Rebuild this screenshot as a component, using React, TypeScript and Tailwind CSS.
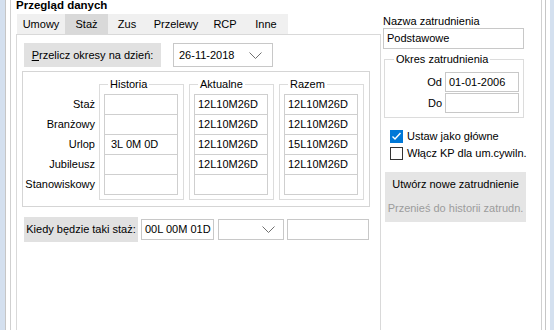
import React from 'react';

// Dane tabeli stażu
const rows = ['Staż', 'Branżowy', 'Urlop', 'Jubileusz', 'Stanowiskowy'];
const historia = ['', '', '3L 0M 0D', '', ''];
const aktualne = ['12L10M26D', '12L10M26D', '12L10M26D', '12L10M26D', ''];
const razem = ['12L10M26D', '12L10M26D', '15L10M26D', '12L10M26D', ''];

const tabs = [
    { label: 'Umowy', cls: 'w-[48px] bg-[#f0f0f0]' },
    { label: 'Staż', cls: 'w-[43px] bg-[#d9d9d9]' },
    { label: 'Zus', cls: 'w-[38px] bg-[#f0f0f0]' },
    { label: 'Przelewy', cls: 'w-[60px] bg-[#f0f0f0]' },
    { label: 'RCP', cls: 'w-[38px] bg-[#f0f0f0]' },
    { label: 'Inne', cls: 'w-[44px] bg-[#f0f0f0]' },
];

const Chevron = () => (
    <svg width="13" height="7" viewBox="0 0 13 7" className="shrink-0">
        <polyline points="0.5,0.5 6.5,6.5 12.5,0.5" fill="none" stroke="#707070" strokeWidth="1" />
    </svg>
);

function Column({ title, values, cellClass }: { title: string; values: string[]; cellClass: string }) {
    return (
        <fieldset className="w-[85px] border border-[#dcdcdc] pl-[4px] pr-[5px] pb-[4px]">
            <legend className="ml-[4px] px-[2px] leading-[14px]">{title}</legend>
            <div className="mt-[3px] border-x border-b border-[#cfcfcf]">
                {values.map((v, i) => (
                    <div key={i} className={`h-[20px] border-t border-[#cfcfcf] leading-[19px] whitespace-nowrap ${cellClass}`}>
                        {v}
                    </div>
                ))}
            </div>
        </fieldset>
    );
}

export default function App() {
    return (
        <div className="w-[554px] h-[330px] overflow-hidden flex bg-[#d4e0ef] text-[11px] text-black font-['Liberation_Sans',Arial,sans-serif]">
            <div className="w-[5px] shrink-0" />
            <div className="w-[541px] shrink-0 h-full bg-white border-x border-[#c6c6c6] pl-[4px] pr-[3px]">
                <div className="h-full border-x border-[#d0d0d0]">
                    {/* Tytuł grupy */}
                    <div className="h-[14px] leading-[10px] pl-[5px] font-bold text-[11.5px]">Przegląd danych</div>

                    <div className="flex h-[400px]">
                        {/* Lewa kolumna: zakładki */}
                        <div className="pl-[5px] flex flex-col">
                            <div className="flex h-[20px] pl-[1px]">
                                {tabs.map(t => (
                                    <div key={t.label} className={`${t.cls} h-[20px] leading-[20px] text-center`}>{t.label}</div>
                                ))}
                            </div>
                            <div className="w-[365px] flex-1 border border-[#d9d9d9]">
                                <div className="flex items-start mt-[8px] ml-[7px] gap-[12px]">
                                    <div className="w-[137px] h-[24px] bg-[#e1e1e1] leading-[24px] text-center">
                                        <span className="underline">P</span>rzelicz okresy na dzień:
                                    </div>
                                    <div className="w-[100px] h-[24px] border border-[#c8c8c8] flex items-center justify-between pl-[5px] pr-[10px]">
                                        <span>26-11-2018</span>
                                        <Chevron />
                                    </div>
                                </div>

                                <div className="mt-[4px] ml-[5px] w-[348px] border border-[#d5d5d5] pt-[5px] pb-[6px] flex">
                                    <div className="w-[76px] pt-[17px] pr-[4px] text-right">
                                        {rows.map(r => (
                                            <div key={r} className="h-[20px] leading-[20px]">{r}</div>
                                        ))}
                                    </div>
                                    <div className="flex gap-[5px]">
                                        <Column title="Historia" values={historia} cellClass="pl-[6px]" />
                                        <Column title="Aktualne" values={aktualne} cellClass="pl-[3px]" />
                                        <Column title="Razem" values={razem} cellClass="pl-[3px]" />
                                    </div>
                                </div>

                                <div className="mt-[10px] ml-[7px] flex items-center">
                                    <div className="w-[114px] h-[25px] bg-[#e1e1e1] leading-[25px] text-center">Kiedy będzie taki staż:</div>
                                    <div className="ml-[3px] w-[73px] h-[21px] border border-[#c8c8c8] leading-[19px] pl-[3px]">00L 00M 01D</div>
                                    <div className="ml-[4px] w-[66px] h-[21px] border border-[#c8c8c8] flex items-center justify-end pr-[8px]">
                                        <Chevron />
                                    </div>
                                    <div className="ml-[3px] w-[82px] h-[21px] border border-[#c8c8c8]" />
                                </div>
                            </div>
                        </div>

                        {/* Prawa kolumna: zatrudnienie */}
                        <div className="flex-1 pl-[2px]">
                            <div className="h-[14px] leading-[14px]">Nazwa zatrudnienia</div>
                            <div className="w-[141px] h-[21px] border border-[#c8c8c8] leading-[19px] pl-[3px]">Podstawowe</div>

                            <fieldset className="mt-[3px] ml-[1px] w-[140px] border border-[#dcdcdc] pr-[4px] pb-[4px]">
                                <legend className="ml-[9px] px-[2px] leading-[14px]">Okres zatrudnienia</legend>
                                <div className="mt-[6px] flex items-center">
                                    <div className="flex-1 text-right pr-[3px]">Od</div>
                                    <div className="w-[74px] h-[20px] border border-[#c8c8c8] leading-[18px] pl-[3px]">01-01-2006</div>
                                </div>
                                <div className="mt-[1px] flex items-center">
                                    <div className="flex-1 text-right pr-[3px]">Do</div>
                                    <div className="w-[74px] h-[20px] border border-[#c8c8c8]" />
                                </div>
                            </fieldset>

                            <div className="mt-[10px] h-[17px] flex items-center pl-[7px] gap-[4px]">
                                <div className="w-[13px] h-[13px] bg-[#0078d7] flex items-center justify-center">
                                    <svg width="11" height="11" viewBox="0 0 11 11">
                                        <polyline points="1.5,5.5 4,8 9.5,2" fill="none" stroke="white" strokeWidth="1.4" />
                                    </svg>
                                </div>
                                <span>Ustaw jako główne</span>
                            </div>
                            <div className="h-[17px] flex items-center pl-[7px] gap-[4px]">
                                <div className="w-[13px] h-[13px] border border-[#333333] bg-white" />
                                <span>Włącz KP dla um.cywiln.</span>
                            </div>

                            <div className="mt-[10px] ml-[2px] w-[141px] bg-[#e5e5e5]">
                                <div className="h-[25px] leading-[25px] text-center">Utwórz nowe zatrudnienie</div>
                                <div className="h-[25px] leading-[23px] text-center text-[#9c9c9c]">Przenieś do historii zatrudn.</div>
                            </div>
                        </div>
                    </div>
                </div>
            </div>
            <div className="w-[4px] shrink-0 bg-white" />
        </div>
    );
}
